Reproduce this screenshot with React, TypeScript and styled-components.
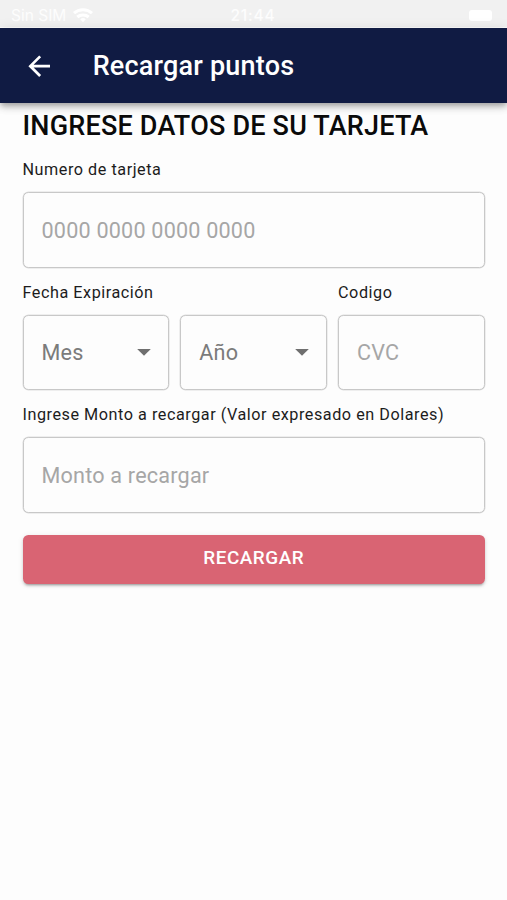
import React from "react";
import styled, { createGlobalStyle } from "styled-components";

const GlobalStyle = createGlobalStyle`
  * { box-sizing: border-box; }
  html, body { margin: 0; background: #fdfdfd; }
  body, input, button { font-family: Roboto, sans-serif; }
`;

const Screen = styled.div`
  width: 100%;
  min-height: 900px;
  background: #fdfdfd;
  overflow: hidden;
`;

const StatusBar = styled.div`
  display: grid;
  grid-template-columns: 1fr auto 1fr;
  align-items: center;
  height: 28px;
  padding: 3px 15px 0 11px;
  background: #f1f1f1;
  border-bottom: 1px solid #fff;
  color: #fdfdfd;
  font-family: Inter, sans-serif;
  font-size: 15.5px;
`;

const Carrier = styled.div`
  display: flex;
  align-items: center;
  gap: 7px;
  letter-spacing: 0;
`;

const Clock = styled.div`
  padding-left: 3px;
  font-weight: 500;
  letter-spacing: 0.8px;
`;

const Battery = styled.div`
  justify-self: end;
  width: 23px;
  height: 11px;
  border-radius: 3px;
  background: #fff;
`;

const AppBar = styled.header`
  position: relative;
  display: flex;
  align-items: center;
  gap: 37.7px;
  height: 75px;
  padding: 0 22.6px;
  background: #101b43;
  color: #fff;
  box-shadow: 0 3px 5px -1px rgba(0, 0, 0, 0.22), 0 5px 7px rgba(0, 0, 0, 0.14),
    0 1px 12px rgba(0, 0, 0, 0.1);
`;

const BackButton = styled.button`
  display: flex;
  padding: 0.5px 0 0;
  border: 0;
  background: none;
  color: inherit;
`;

const Title = styled.h1`
  margin: 0;
  padding-top: 1px;
  font-size: 27px;
  font-weight: 500;
  line-height: 43px;
  letter-spacing: 0.2px;
`;

const Form = styled.form`
  display: flex;
  flex-direction: column;
  padding: 1px 22px 0 22.5px;
`;

const Heading = styled.h2`
  margin: 0 0 8.3px;
  color: #0a0a0a;
  font-size: 27px;
  font-weight: 500;
  line-height: 44px;
  letter-spacing: 0.2px;
  white-space: nowrap;
`;

const Field = styled.div`
  display: flex;
  flex-direction: column;
  min-width: 0;
  margin-bottom: 11px;
`;

const Label = styled.label`
  height: 27px;
  margin-bottom: 9px;
  color: #1c1c1c;
  font-size: 16.2px;
  line-height: 27px;
  letter-spacing: 0.54px;
  white-space: nowrap;
`;

const outline = `
  width: 100%;
  height: 75.5px;
  padding: 0 18px;
  border: 1px solid #c8c8c8;
  border-radius: 5.4px;
  background: #fdfdfd;
  box-shadow: 0 0 0 0.5px rgba(0, 0, 0, 0.12);
  font-size: 21.6px;
  letter-spacing: 0.2px;
`;

const Input = styled.input`
  ${outline}
  color: #222;
  outline: none;
  &::placeholder {
    color: #a6a6a6;
    opacity: 1;
  }
`;

const Select = styled.div`
  ${outline}
  display: flex;
  align-items: center;
  justify-content: space-between;
  padding-right: 17.3px;
  padding-bottom: 1px;
  color: #7b7b7b;
`;

const Row = styled.div`
  display: grid;
  grid-template-columns: repeat(3, 1fr);
  column-gap: 10.8px;
`;

const Expiry = styled(Field)`
  grid-column: span 2;
`;

const Selects = styled.div`
  display: grid;
  grid-template-columns: 1fr 1fr;
  gap: 10.8px;
`;

const Submit = styled.button`
  height: 49px;
  margin-top: 10.8px;
  padding: 0 0 3px;
  border: 0;
  border-radius: 5.4px;
  background: #d96473;
  color: #fff;
  font-size: 18.9px;
  font-weight: 500;
  letter-spacing: 0.54px;
  box-shadow: 0 3px 2px -2px rgba(0, 0, 0, 0.2), 0 2px 3px rgba(0, 0, 0, 0.16),
    0 1px 6px rgba(0, 0, 0, 0.08);
`;

const WifiIcon = () => (
  <svg width="20" height="15" viewBox="0 0 20 15" fill="none" stroke="#fff" strokeWidth="3">
    <path d="M1 5.2C6 .6 14 .6 19 5.2M4.3 9C7.5 6.2 12.5 6.2 15.7 9" />
    <path d="M7.2 11.2q2.8-2.4 5.6 0L10 14.2z" fill="#fff" stroke="none" />
  </svg>
);

const BackIcon = () => (
  <svg width="32.4" height="32.4" viewBox="0 0 24 24" fill="currentColor">
    <path d="M20 11H7.83l5.59-5.59L12 4l-8 8 8 8 1.41-1.41L7.83 13H20v-2z" />
  </svg>
);

const Caret = () => (
  <svg width="14" height="7" viewBox="0 0 14 7" fill="#6f6f6f">
    <path d="M.2 0h13.6L7 6.8z" />
  </svg>
);

export default function App() {
  return (
    <Screen>
      <GlobalStyle />
      <StatusBar>
        <Carrier>
          Sin SIM <WifiIcon />
        </Carrier>
        <Clock>21:44</Clock>
        <Battery />
      </StatusBar>
      <AppBar>
        <BackButton type="button" aria-label="Volver">
          <BackIcon />
        </BackButton>
        <Title>Recargar puntos</Title>
      </AppBar>
      <Form>
        <Heading>INGRESE DATOS DE SU TARJETA</Heading>
        <Field>
          <Label htmlFor="card">Numero de tarjeta</Label>
          <Input id="card" placeholder="0000 0000 0000 0000" />
        </Field>
        <Row>
          <Expiry>
            <Label>Fecha Expiración</Label>
            <Selects>
              <Select>Mes <Caret /></Select>
              <Select>Año <Caret /></Select>
            </Selects>
          </Expiry>
          <Field>
            <Label htmlFor="cvc">Codigo</Label>
            <Input id="cvc" placeholder="CVC" />
          </Field>
        </Row>
        <Field>
          <Label htmlFor="amount">Ingrese Monto a recargar (Valor expresado en Dolares)</Label>
          <Input id="amount" placeholder="Monto a recargar" />
        </Field>
        <Submit type="button">RECARGAR</Submit>
      </Form>
    </Screen>
  );
}
